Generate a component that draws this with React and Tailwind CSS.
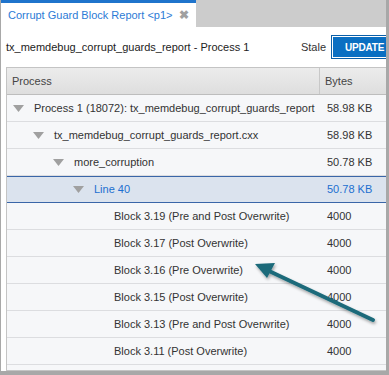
import React from 'react';

const rows = [
  { level: 0, label: 'Process 1 (18072): tx_memdebug_corrupt_guards_report', bytes: '58.98 KB', open: true },
  { level: 1, label: 'tx_memdebug_corrupt_guards_report.cxx', bytes: '58.98 KB', open: true },
  { level: 2, label: 'more_corruption', bytes: '50.78 KB', open: true },
  { level: 3, label: 'Line 40', bytes: '50.78 KB', open: true, selected: true },
  { level: 4, label: 'Block 3.19 (Pre and Post Overwrite)', bytes: '4000' },
  { level: 4, label: 'Block 3.17 (Post Overwrite)', bytes: '4000' },
  { level: 4, label: 'Block 3.16 (Pre Overwrite)', bytes: '4000' },
  { level: 4, label: 'Block 3.15 (Post Overwrite)', bytes: '4000' },
  { level: 4, label: 'Block 3.13 (Pre and Post Overwrite)', bytes: '4000' },
  { level: 4, label: 'Block 3.11 (Post Overwrite)', bytes: '4000' },
];

const indent = ['pl-[6px]', 'pl-[26px]', 'pl-[46px]', 'pl-[66px]', 'pl-[86px]'];

const Caret = () => (
  <svg width="11" height="7" viewBox="0 0 11 7" className="shrink-0">
    <path d="M0 0 L11 0 L5.5 7 Z" fill="#a0a0a0" />
  </svg>
);

// Tree row
const Row = ({ level, label, bytes, open, selected }) => (
  <div
    className={`flex h-[27px] items-center ${
      selected
        ? 'bg-[#dbe3ee] border-y border-[#3a66a8] text-[#1c6fd0]'
        : 'border-b border-[#dcdde0] text-[#333333]'
    }`}
  >
    <div className={`flex w-[313px] items-center gap-[10px] ${indent[level]}`}>
      {open ? <Caret /> : <span className="w-[11px] shrink-0" />}
      <span className="whitespace-nowrap">{label}</span>
    </div>
    <div className="pl-[7px] whitespace-nowrap">{bytes}</div>
  </div>
);

export default function App() {
  return (
    <div
      className="relative w-[389px] h-[375px] overflow-hidden bg-white border-l border-r-[3px] border-b-[4px] border-[#a8a8a8] text-[11px]"
      style={{ fontFamily: '"Liberation Sans", Arial, sans-serif' }}
    >
      {/* Tab strip */}
      <div className="flex h-[27px] bg-[#cccccc]">
        <div className="flex w-[195px] items-center justify-between bg-white border-t-[3px] border-[#1f74cc] pl-[7px] pr-[7px]">
          <span className="text-[#2b7bd6] whitespace-nowrap">Corrupt Guard Block Report &lt;p1&gt;</span>
          <span className="text-[#a0a0a0] text-[12px] font-bold">✖</span>
        </div>
      </div>

      <div className="pl-[5px]">
        {/* Title row */}
        <div className="flex h-[40px] items-center justify-between">
          <span className="text-[#222222] whitespace-nowrap">tx_memdebug_corrupt_guards_report - Process 1</span>
          <div className="flex items-center gap-[5px] -mr-[18px]">
            <span className="text-[#333333]">Stale</span>
            <button className="h-[24px] w-[73px] pl-[13px] text-left bg-[#0a6fc2] border border-[#0a5fa8] shadow-[inset_0_0_0_1px_#ffffff] text-white font-bold text-[10px] tracking-[-0.2px]">
              UPDATE
            </button>
          </div>
        </div>

        {/* Table */}
        <div className="h-[304px] bg-[#f6f7f9] border border-r-0 border-[#c4c4c4]">
          <div className="flex h-[27px] items-center bg-gradient-to-b from-[#ececec] to-[#dedede] border-b border-[#bdbdbd] text-[#444444]">
            <div className="w-[313px] h-full flex items-center pl-[5px] border-r border-[#c8c8c8]">Process</div>
            <div className="pl-[5px]">Bytes</div>
          </div>
          {rows.map((r, i) => (
            <Row key={i} {...r} />
          ))}
        </div>
      </div>

      {/* Callout arrow */}
      <svg className="absolute left-0 top-0 pointer-events-none" width="389" height="375">
        <defs>
          <filter id="sh" x="-20%" y="-20%" width="140%" height="140%">
            <feDropShadow dx="1" dy="2" stdDeviation="1.5" floodColor="#000" floodOpacity="0.35" />
          </filter>
        </defs>
        <g filter="url(#sh)">
          <line x1="372" y1="320" x2="268" y2="271" stroke="#1b6a7a" strokeWidth="4" strokeLinecap="round" />
          <path d="M254 264 L274 263 L266 278 Z" fill="#1b6a7a" />
        </g>
      </svg>
    </div>
  );
}
